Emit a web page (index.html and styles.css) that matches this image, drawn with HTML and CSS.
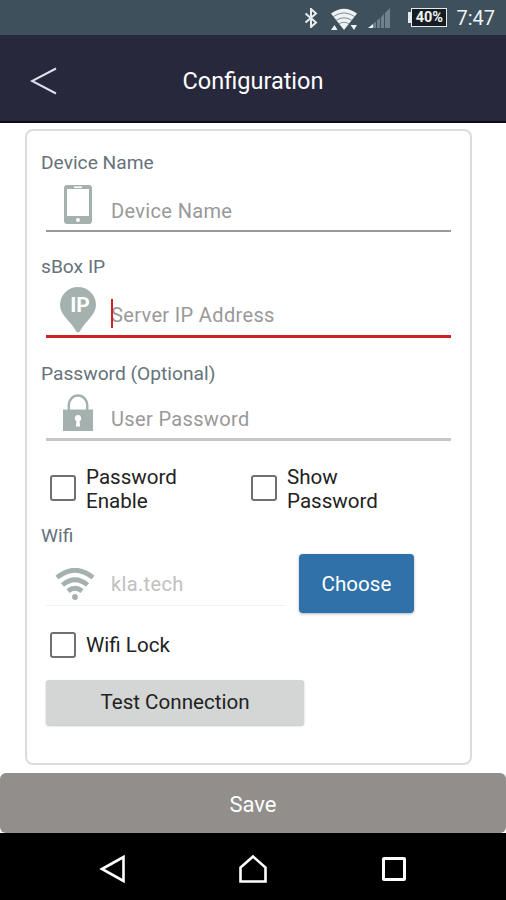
FILE: index.html
```
<!DOCTYPE html>
<html lang="en">
<head>
  <meta charset="UTF-8">
  <meta name="viewport" content="width=device-width, initial-scale=1.0">
  <title>Configuration</title>
  <link rel="stylesheet" href="styles.css">
</head>
<body>
  <!-- Status Bar -->
  <div class="status-bar">
    <svg class="bluetooth" width="14" height="20" viewBox="0 0 14 20"><path d="M1.5 5.5 L12 14.5 L7 19 V1 L12 5.5 L1.5 14.5" fill="none" stroke="#e8edf0" stroke-width="2"/></svg>
    <svg class="status-wifi" width="28" height="23" viewBox="0 0 28 23">
      <path d="M1 5.5 Q14 -4 27 5.5 L14 22 Z" fill="#eef2f4"/>
      <path d="M3 8.8 Q14 1 25 8.8 M6 12.5 Q14 7 22 12.5 M9 16 Q14 12.5 19 16" fill="none" stroke="#7d8e96" stroke-width="1"/>
      <path d="M1 22 L4.5 17 L7.5 22 Z M20.5 17 H27 L24 22 Z" fill="#eef2f4"/>
    </svg>
    <svg class="signal" width="23" height="21" viewBox="0 0 23 21">
      <path d="M5 20 V16 L8 13.5 V20 Z M9 20 V12.5 L12 10 V20 Z M13 20 V9 L16 6 V20 Z M17 20 V5 L22 0 V20 Z" fill="#71818b"/>
      <path d="M0 20 L5 16 V20 Z" fill="#eef2f4"/>
    </svg>
    <div class="battery">40%</div>
    <span class="time">7:47</span>
  </div>

  <!-- Header -->
  <div class="header">
    <svg class="back" width="28" height="28" viewBox="0 0 28 28"><path d="M26 1.5 L2 14 L26 26.5" fill="none" stroke="#dfdfee" stroke-width="2"/></svg>
    <h1>Configuration</h1>
  </div>

  <!-- Configuration Form -->
  <div class="content">
    <div class="card">
      <label class="label">Device Name</label>
      <div class="field device">
        <svg class="icon" width="28" height="40" viewBox="0 0 28 40">
          <rect width="28" height="39" rx="3" fill="#a4b1ae"/>
          <path d="M3 4 H25 V31 H3 Z M10 1.5 H18 V3 H10 Z" fill="#fff"/>
          <circle cx="14" cy="35" r="2" fill="#fff"/>
        </svg>
        <span class="placeholder">Device Name</span>
      </div>

      <label class="label">sBox IP</label>
      <div class="field server">
        <svg class="icon" width="36" height="46" viewBox="0 0 36 46">
          <path d="M18 45.5 Q16.5 45.5 15 42.5 C10.5 34 0 28 0 18 A18 18 0 0 1 36 18 C36 28 25.5 34 21 42.5 Q19.5 45.5 18 45.5 Z" fill="#a4b1ae"/>
          <text x="20" y="25" text-anchor="middle" class="pin-text">IP</text>
        </svg>
        <span class="placeholder cursor">Server IP Address</span>
      </div>

      <label class="label">Password (Optional)</label>
      <div class="field password">
        <svg class="icon" width="30" height="37" viewBox="0 0 30 37">
          <path d="M5.8 17 V11 A9.2 9.5 0 0 1 24.2 11 V17" fill="none" stroke="#a4b1ae" stroke-width="2.5"/>
          <rect y="15.5" width="30" height="21.5" fill="#a4b1ae"/>
          <path d="M15 21 A3.2 3.2 0 0 1 16.6 27 L17 32.5 H13 L13.4 27 A3.2 3.2 0 0 1 15 21 Z" fill="#fff"/>
        </svg>
        <span class="placeholder">User Password</span>
      </div>

      <div class="checks">
        <div class="check"><span class="box"></span><span>Password<br>Enable</span></div>
        <div class="check"><span class="box"></span><span>Show<br>Password</span></div>
      </div>

      <label class="label">Wifi</label>
      <div class="wifi-row">
        <div class="network">
          <svg class="icon" width="40" height="32" viewBox="0 0 40 32">
            <path d="M2 9.5 Q20 -5 38 9.5 M7.5 17 Q20 6.5 32.5 17 M13 23 Q20 17.5 27 23" fill="none" stroke="#a4b1ae" stroke-width="4.8"/>
            <circle cx="20" cy="29" r="2.9" fill="#a4b1ae"/>
          </svg>
          <span class="placeholder">kla.tech</span>
        </div>
        <button class="choose">Choose</button>
      </div>

      <div class="check lock"><span class="box"></span><span>Wifi Lock</span></div>
      <button class="test">Test Connection</button>
    </div>
  </div>

  <button class="save">Save</button>

  <!-- Navigation Bar -->
  <div class="nav-bar">
    <svg width="28" height="30" viewBox="0 0 28 30"><path d="M4 15 L25.5 3 V27 Z" fill="none" stroke="#fff" stroke-width="2.6"/></svg>
    <svg width="28" height="30" viewBox="0 0 28 30"><path d="M1.5 27.5 V13.5 L14 2.5 L26.5 13.5 V27.5 Z" fill="none" stroke="#fff" stroke-width="2.6"/></svg>
    <svg width="28" height="30" viewBox="0 0 28 30"><rect x="3.5" y="4.5" width="21" height="21" rx="0.5" fill="none" stroke="#fff" stroke-width="3"/></svg>
  </div>
</body>
</html>
```
FILE: styles.css
```
/* General Styles */
* {
  box-sizing: border-box;
}

body {
  font-family: Roboto, 'Liberation Sans', sans-serif;
  margin: 0;
  background: #fff;
  color: #222;
  height: 900px;
  display: flex;
  flex-direction: column;
  overflow: hidden;
  font-size: 20px;
}

button {
  font-family: inherit;
  font-size: 20.6px;
  border: none;
  padding: 0;
}

svg {
  display: block;
  flex-shrink: 0;
}

/* Status Bar */
.status-bar {
  height: 35px;
  background: #3d505c;
  display: flex;
  align-items: center;
  justify-content: flex-end;
  padding-right: 11px;
  color: #eef2f4;
}

.bluetooth {
  margin-top: 1px;
}

.status-wifi {
  margin: 3px 0 0 12px;
}

.signal {
  margin: 2px 0 0 10px;
}

.battery {
  position: relative;
  width: 36px;
  height: 19px;
  margin-left: 20px;
  border: 1.5px solid #e6eaec;
  background: #151d22;
  font-size: 14.5px;
  font-weight: bold;
  line-height: 17px;
  text-align: center;
}

.battery::before {
  content: '';
  position: absolute;
  left: -4px;
  top: 3px;
  width: 3px;
  height: 11px;
  background: #e6eaec;
}

.time {
  margin-left: 9px;
  font-size: 20px;
}

/* Header */
.header {
  height: 88px;
  background: #28283d;
  border-bottom: 2px solid #0b0b16;
  display: grid;
  grid-template-columns: 60px 1fr 60px;
  align-items: center;
  padding-top: 5px;
}

.back {
  margin-left: 30px;
}

h1 {
  margin: 0;
  color: #fff;
  font-size: 23.5px;
  font-weight: 400;
  text-align: center;
}

/* Form Card */
.content {
  height: 650px;
  padding: 6px 34px 8px 25px;
}

.card {
  height: 636px;
  border: 2px solid #dcdcdc;
  border-radius: 8px;
  padding: 19px 19px 0 14px;
}

.label {
  display: block;
  height: 24px;
  line-height: 25px;
  font-size: 19.2px;
  color: #66727a;
}

.field {
  display: flex;
  align-items: flex-end;
  margin-left: 5px;
  border-bottom: 2px solid #999;
}

.icon {
  margin: 0 auto;
}

.field .icon {
  position: relative;
  left: -1px;
}

.placeholder {
  width: 340px;
  height: 24px;
  line-height: 24px;
  letter-spacing: 0.35px;
  color: #999;
}

.device {
  height: 58px;
  margin-bottom: 22px;
  padding-bottom: 7px;
}

.device .icon {
  margin-bottom: -2px;
}

.server {
  height: 60px;
  margin-bottom: 23px;
  padding-bottom: 3px;
  border-bottom: 3px solid #cf2027;
}

.server .icon {
  margin-bottom: -1px;
}

.server .placeholder {
  margin-bottom: 5px;
}

.pin-text {
  fill: #fff;
  font-size: 21px;
  font-weight: bold;
}

.cursor {
  position: relative;
}

.cursor::before {
  content: '';
  position: absolute;
  left: 0;
  top: -4px;
  width: 2px;
  height: 29px;
  background: #cf2027;
}

.password {
  height: 56px;
  margin-bottom: 24px;
  padding-bottom: 7px;
  border-bottom: 3px solid #c6c6c6;
}

/* Checkboxes */
.checks {
  display: grid;
  grid-template-columns: 201px 1fr;
  height: 58px;
}

.check {
  display: flex;
  align-items: flex-start;
  margin-left: 9px;
  line-height: 24px;
  font-size: 20.6px;
}

.box {
  width: 26px;
  height: 26px;
  margin: 10px 10px 0 0;
  border: 2px solid #707070;
  border-radius: 3px;
}

.lock {
  height: 46px;
  align-items: center;
  margin-top: 9px;
}

.lock .box {
  margin-top: 0;
}

/* Wifi */
.wifi-row {
  display: flex;
  margin: 7px 0 0 5px;
}

.network {
  width: 240px;
  height: 52px;
  display: flex;
  align-items: flex-end;
  padding-bottom: 5px;
  border-bottom: 1px solid #f2f2f2;
}

.network .icon {
  margin: 0 16px 0 9px;
}

.network .placeholder {
  width: 175px;
  margin-bottom: 4px;
  color: #c0c0c0;
}

.choose {
  width: 115px;
  height: 59px;
  margin-left: 13px;
  background: #3171a9;
  color: #fff;
  border-radius: 4px;
  box-shadow: 0 1px 3px rgba(0, 0, 0, 0.3);
}

.test {
  display: block;
  width: 258px;
  height: 45px;
  margin: 12px 0 0 5px;
  padding-bottom: 1px;
  background: #d3d6d5;
  color: #222;
  border-radius: 3px;
  box-shadow: 0 1px 2px rgba(0, 0, 0, 0.25);
}

/* Save Button */
.save {
  height: 60px;
  padding-top: 2px;
  background: #918e8b;
  color: #fff;
  font-size: 22px;
  border-radius: 6px;
}

/* Navigation Bar */
.nav-bar {
  flex: 1;
  background: #000;
  display: flex;
  justify-content: center;
  align-items: center;
  gap: 113px;
  padding-top: 4px;
}
```
